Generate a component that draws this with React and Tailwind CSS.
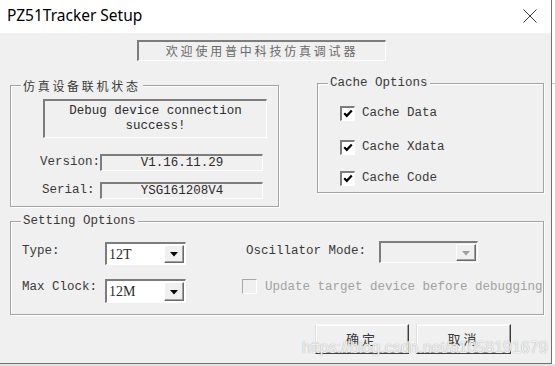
import React from 'react';

const mono = "font-['Liberation_Mono',monospace] text-[12.5px] leading-[15px]";
const cjk = "font-['Noto_Sans_CJK_SC',sans-serif]";

// sunken 3D edge used by text fields, combos and checkboxes
const sunken = 'border-t-2 border-l-2 border-t-[#7d7d7d] border-l-[#7d7d7d] border-b border-r border-b-white border-r-white';
const groupBox = 'relative border border-[#a3a3a3] shadow-[inset_1px_1px_0_#fff,1px_1px_0_#fff]';

const Caption = ({ children, className = '' }) => (
    <span className={`absolute left-[10px] top-[-8px] px-[2px] bg-[#f0f0f0] text-[#3a3a3a] ${className}`}>
        {children}
    </span>
);

const Check = ({ checked, disabled }) => (
    <div
        className={`w-[15px] h-[15px] shrink-0 flex items-center justify-center ${
            disabled
                ? 'border border-t-[#a8a8a8] border-l-[#a8a8a8] border-b-white border-r-white bg-[#f0f0f0]'
                : `${sunken} bg-white`
        }`}
    >
        {checked && (
            <svg width="10" height="9" viewBox="0 0 10 9">
                <path d="M1.2 4.2 L3.8 6.8 L8.8 1.4" stroke="#000" strokeWidth="2.2" fill="none" />
            </svg>
        )}
    </div>
);

const Combo = ({ value, disabled, className = '' }) => (
    <div className={`flex ${sunken} ${disabled ? 'bg-[#f0f0f0]' : 'bg-white'} ${className}`}>
        <div className={`flex-1 pl-[2px] pt-[3px] text-[#2c2c2c] font-['Liberation_Serif',serif] text-[14px] leading-[15px]`}>
            {value}
        </div>
        <div className="w-[20px] my-[1px] mr-[1px] flex items-center justify-center bg-[#f0f0f0] border border-t-white border-l-white border-b-[#6a6a6a] border-r-[#6a6a6a] shadow-[inset_-1px_-1px_0_#a0a0a0]">
            <svg width="8" height="5" viewBox="0 0 8 5" className="mt-[1px]">
                <path d="M0 0 H8 L4 4.5 Z" fill={disabled ? '#a0a0a0' : '#000'} />
            </svg>
        </div>
    </div>
);

const Field = ({ children }) => (
    <div className={`w-[163px] h-[17px] ${sunken} flex items-center justify-center text-[#2c2c2c] ${mono}`}>
        {children}
    </div>
);

const Button = ({ children, className = '' }) => (
    <button
        className={`h-[30px] bg-[#f0f0f0] border-t border-l border-t-[#f8f8f8] border-l-[#e0e0e0] border-b border-r border-b-[#3c3c3c] border-r-[#3c3c3c] shadow-[inset_-1px_-1px_0_#a0a0a0,inset_1px_1px_0_#fff] flex items-center justify-center text-[13px] tracking-[3px] text-[#3a3a3a] ${cjk} ${className}`}
    >
        {children}
    </button>
);

export default function App() {
    return (
        <div className="w-[555px] h-[366px] bg-[#e4e4e4] overflow-hidden">
            <div className="flex h-[364px]">
                <div className="w-[552px] h-[364px] flex flex-col border-r border-b border-[#707070] relative">
                    {/* title bar */}
                    <div className="h-[33px] shrink-0 bg-white flex items-center justify-between pl-[7px] pr-[14px]">
                        <span className="text-[15.5px] text-black font-['Noto_Sans',sans-serif] leading-none pb-[2px]">
                            PZ51Tracker Setup
                        </span>
                        <svg width="14" height="14" viewBox="0 0 14 14" className="mb-[1px]">
                            <path d="M0.5 0.5 L13.5 13.5 M13.5 0.5 L0.5 13.5" stroke="#222" strokeWidth="0.9" />
                        </svg>
                    </div>

                    {/* body */}
                    <div className="flex-1 bg-[#f0f0f0] flex flex-col pl-[10px]">
                        <div className={`mt-[7px] ml-[127px] w-[249px] h-[21px] shrink-0 ${sunken} flex items-center justify-center text-[12px] tracking-[2.8px] text-[#6a6a6a] ${cjk}`}>
                            欢迎使用普中科技仿真调试器
                        </div>

                        <div className="flex items-start mt-[22px]">
                            {/* device status */}
                            <div className={`${groupBox} mt-[2px] w-[269px] h-[122px] flex flex-col`}>
                                <Caption className={`text-[12px] leading-[15px] tracking-[2.7px] ${cjk}`}>仿真设备联机状态</Caption>
                                <div className={`ml-[32px] mt-[13px] w-[224px] h-[39px] ${sunken} pt-[3px] text-center text-[#2c2c2c] ${mono}`}>
                                    Debug device connection
                                    <br />
                                    success!
                                </div>
                                <div className="flex items-center mt-[16px]">
                                    <span className={`w-[89px] pl-[29px] text-[#3a3a3a] ${mono}`}>Version:</span>
                                    <Field>V1.16.11.29</Field>
                                </div>
                                <div className="flex items-center mt-[11px]">
                                    <span className={`w-[89px] pl-[31px] text-[#3a3a3a] ${mono}`}>Serial:</span>
                                    <Field>YSG161208V4</Field>
                                </div>
                            </div>

                            {/* cache options */}
                            <div className={`${groupBox} ml-[38px] w-[227px] h-[110px] flex flex-col`}>
                                <Caption className={`${mono} left-[9px]`}>Cache Options</Caption>
                                {[
                                    ['Cache Data', 'mt-[21px]'],
                                    ['Cache Xdata', 'mt-[18px]'],
                                    ['Cache Code', 'mt-[15px]'],
                                ].map(([label, m]) => (
                                    <div key={label} className={`flex items-center gap-[7px] ml-[22px] ${m}`}>
                                        <Check checked />
                                        <span className={`text-[#3a3a3a] pt-[1px] ${mono}`}>{label}</span>
                                    </div>
                                ))}
                            </div>
                        </div>

                        {/* setting options */}
                        <div className={`${groupBox} mt-[14px] w-[534px] h-[94px] flex flex-col`}>
                            <Caption className={`${mono}`}>Setting Options</Caption>
                            <div className="flex items-start mt-[20px] h-[23px]">
                                <span className={`w-[94px] pl-[11px] mt-[2px] text-[#3a3a3a] ${mono}`}>Type:</span>
                                <Combo value="12T" className="w-[81px] h-[23px]" />
                                <span className={`ml-[60px] w-[133px] mt-[2px] text-[#3a3a3a] ${mono}`}>Oscillator Mode:</span>
                                <Combo value="" disabled className="w-[99px] h-[22px] -mt-[1px]" />
                            </div>
                            <div className="flex items-start mt-[14px] h-[24px]">
                                <span className={`w-[94px] pl-[11px] mt-[1px] text-[#3a3a3a] ${mono}`}>Max Clock:</span>
                                <Combo value="12M" className="w-[81px] h-[24px]" />
                                <div className="ml-[56px] flex items-start gap-[8px]">
                                    <Check disabled />
                                    <span className={`text-[#a2a2a2] whitespace-nowrap pt-[1px] ${mono}`}>
                                        Update target device before debugging
                                    </span>
                                </div>
                            </div>
                        </div>

                        <div className="flex mt-[9px] ml-[305px] gap-[7px]">
                            <Button className="w-[94px]">确定</Button>
                            <Button className="w-[95px]">取消</Button>
                        </div>
                    </div>

                    {/* blog watermark */}
                    <span className="absolute left-[302px] top-[336px] text-[16px] font-['Liberation_Sans',sans-serif] text-white/85 [text-shadow:0_0_1px_#8a8a8a] pointer-events-none">
                        https://blog.csdn.net/a1058191679
                    </span>
                </div>

                {/* edge of the window behind */}
                <div className="flex-1 bg-white flex flex-col">
                    <div className="h-[83px]" />
                    <div className="h-px bg-[#c8c8c8]" />
                </div>
            </div>
        </div>
    );
}
